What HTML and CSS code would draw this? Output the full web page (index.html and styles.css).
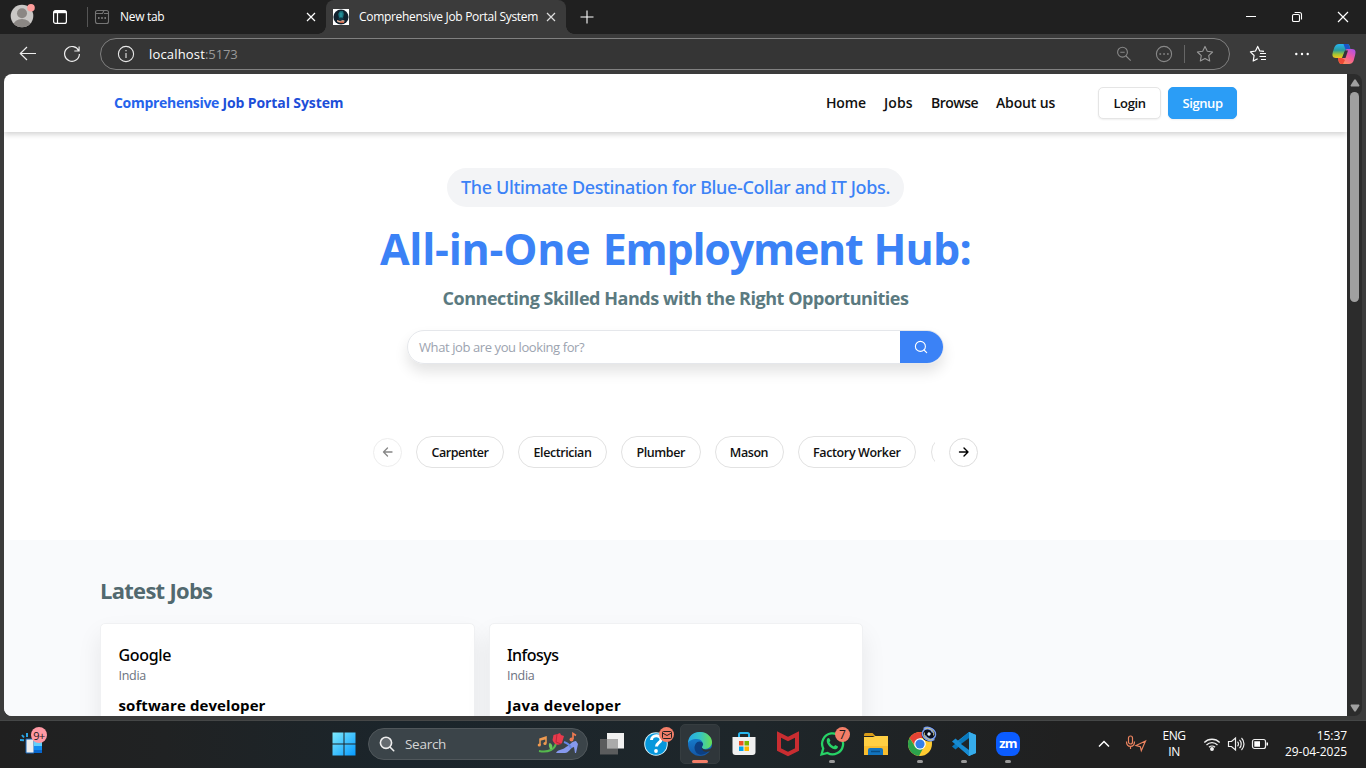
FILE: index.html
```html
<!DOCTYPE html>
<html lang="en">
<head>
<meta charset="utf-8">
<title>Comprehensive Job Portal System</title>
<link rel="stylesheet" href="styles.css">
</head>
<body>
<div class="tabs">
  <svg class="avatar" width="26" height="26" viewBox="0 0 26 26"><defs><clipPath id="av"><circle cx="12" cy="14" r="11.3"/></clipPath></defs><g clip-path="url(#av)"><rect width="26" height="26" fill="#c9c7c5"/><circle cx="12" cy="11.3" r="5" fill="#8b8784"/><ellipse cx="12" cy="23" rx="8.5" ry="6" fill="#8b8784"/></g><circle cx="21" cy="5.7" r="3.8" fill="#ff9d9b"/></svg>
  <svg class="workspace" width="16" height="16" viewBox="0 0 16 16" fill="none" stroke="#fff" stroke-width="1.2"><rect x="1.6" y="1.6" width="12.8" height="12.8" rx="2"/><path d="M2 3h12" stroke-width="2.4"/><path d="M5.5 4v10"/></svg>
  <i class="tab-line"></i>
  <div class="tab new-tab">
    <svg width="16" height="16" viewBox="0 0 16 16" fill="none" stroke="#757575" stroke-width="1.1"><rect x="1.5" y="1.5" width="13" height="13" rx="2"/><path d="M1.5 4.5h7l1.5-3M10 4.5h4.5"/><path d="M4 9h1.6M7.2 9h1.6M10.4 9H12" stroke-width="1.8"/></svg>
    <span class="tab-title short">New tab</span>
    <svg class="x" width="12" height="12" viewBox="0 0 12 12" stroke="#fff" stroke-width="1.2"><path d="M2 2l8 8M10 2l-8 8"/></svg>
  </div>
  <div class="tab active">
    <svg width="16" height="16" viewBox="0 0 16 16"><path fill="#fff" d="M0 0h16v16H0z"/><circle cx="8" cy="8" r="7.6" fill="#10202d"/><path d="M5 5l2-3h3l1 3-1 4H6z" fill="#14636e"/><path d="M6.500 3.500h3V8h-3z" fill="#248d96"/><path d="M5 9h6l-1 2H6z" fill="#103746"/><path d="M4 11l3 1 3-1 2 1-2 1.500H6l-2-1z" fill="#e2b49a"/><path d="M7 12.500h4V14H7z" fill="#c75f42"/></svg>
    <span class="tab-title">Comprehensive Job Portal System</span>
    <svg class="x" width="12" height="12" viewBox="0 0 12 12" stroke="#ddd" stroke-width="1.2"><path d="M2 2l8 8M10 2l-8 8"/></svg>
  </div>
  <svg class="plus" width="14" height="14" viewBox="0 0 14 14" stroke="#fff" stroke-width="1.1"><path d="M7 .5v13M.5 7h13"/></svg>
  <div class="window-controls">
    <svg width="12" height="12" viewBox="0 0 12 12" stroke="#fff"><path d="M1 5.5h10"/></svg>
    <svg width="12" height="12" viewBox="0 0 12 12" fill="none" stroke="#fff" stroke-width="1.1"><rect x="1.5" y="3.5" width="7" height="7" rx="1.3"/><path d="M3.6 1.5h4.9a2 2 0 0 1 2 2v4.9"/></svg>
    <svg width="12" height="12" viewBox="0 0 12 12" stroke="#fff" stroke-width="1.2"><path d="M1 1l10 10M11 1L1 11"/></svg>
  </div>
</div>
<div class="toolbar">
  <svg class="back" width="18" height="16" viewBox="0 0 18 16" fill="none" stroke="#eee" stroke-width="1.2"><path d="M17 7.5H1.5M8 1L1.3 7.5 8 14"/></svg>
  <svg class="reload" width="18" height="18" viewBox="0 0 18 18" fill="none" stroke="#eee" stroke-width="1.2"><path d="M15.8 6A7.4 7.4 0 1 0 16.4 9M16.1 1.4V6h-4.8"/></svg>
  <div class="address">
    <svg class="info" width="18" height="18" viewBox="0 0 18 18" fill="none" stroke="#e8e8e8" stroke-width="1.1"><circle cx="9" cy="9" r="7.6"/><path d="M9 8v5M9 5v1.3"/></svg>
    <span class="host">localhost</span><span class="port">:5173</span>
    <svg class="zoom-out" width="16" height="16" viewBox="0 0 16 16" fill="none" stroke="#888" stroke-width="1.1"><circle cx="6.5" cy="6.2" r="4.9"/><path d="M10 10l4.7 4.7M4.3 6.2h4.4"/></svg>
    <svg class="more-circle" width="18" height="18" viewBox="0 0 18 18" fill="none" stroke="#888" stroke-width="1.1"><circle cx="9" cy="9" r="7.6"/><path d="M4.4 9h1.7M8.2 9h1.7M12 9h1.7" stroke-width="1.7"/></svg>
    <i class="address-line"></i>
    <svg width="18" height="18" viewBox="0 0 18 18" fill="none" stroke="#999" stroke-width="1.1" stroke-linejoin="round"><path d="M9 1.4l2.3 4.9 5.3.7-3.9 3.7 1 5.3L9 13.4 4.3 16l1-5.3L1.4 7l5.3-.7z"/></svg>
  </div>
  <svg class="favorites" width="18" height="18" viewBox="0 0 18 18" fill="none" stroke="#fff" stroke-width="1.2" stroke-linejoin="round"><path d="M15 6.400l-4.200-.5L8.700 1.400 6.500 6 1.400 6.800l3.700 3.700-.9 5.500 4.500-2.300M11 8.500h6M10.500 11.500h6.500M12 14.500h5"/></svg>
  <svg class="dots" width="16" height="4" viewBox="0 0 16 4" fill="#fff"><circle cx="2.3" cy="2" r="1.2"/><circle cx="8" cy="2" r="1.2"/><circle cx="13.7" cy="2" r="1.2"/></svg>
  <svg class="copilot" width="24" height="22" viewBox="0 0 24 22"><defs><linearGradient id="c1" x2="0" y2="1"><stop stop-color="#26b5f4"/><stop offset=".45" stop-color="#2b9b9b"/><stop offset=".75" stop-color="#a9c62f"/><stop offset="1" stop-color="#f5c022"/></linearGradient><linearGradient id="c2" x1="1" x2=".2" y2="1"><stop stop-color="#a650ef"/><stop offset=".5" stop-color="#f35b9a"/><stop offset="1" stop-color="#ff9a50"/></linearGradient></defs><path d="M7 1h8c2 0 2.500 1.500 3 3.500L18.500 7H16c-2.500 0-3.500 1.500-4 3.500L10.500 15H4c-4 0-4-3-3-6.500L2.500 4C3.500 2 5 1 7 1z" fill="url(#c1)"/><path d="M11.500 1H15c2 0 2.500 2 3 4l.5 1.500h-5z" fill="#1b55c9"/><path d="M17 21H9.500c-2 0-2.500-1.500-3-3.500L6 15h3c2.500 0 3.500-1.500 4-3.500L14.500 6H20c4 0 4 3 3 6.500L21.500 18c-.7 2-2.500 3-4.500 3z" fill="url(#c2)"/><path d="M6 15h4l3 2-2 4H9.500c-2 0-2.700-2-3-3.500z" fill="#ee4a37"/><path d="M13 7.500h3l-2.500 7.500H10z" fill="#33343b"/></svg>
</div>
<div class="window">
  <main class="page">
    <header class="site-nav">
      <b class="brand">Comprehensive <em>Job Portal System</em></b>
      <nav><a class="n1">Home</a><a class="n2">Jobs</a><a class="n3">Browse</a><a class="n4">About us</a></nav>
      <div class="auth"><button class="login">Login</button><button class="signup">Signup</button></div>
    </header>
    <section class="hero">
      <span class="pill">The Ultimate Destination for Blue-Collar and IT Jobs.</span>
      <h1><span class="lead">All-in-One </span><span class="mid">Employment</span> Hub:</h1>
      <h2>Connecting Skilled Hands with the Right Opportunities</h2>
      <div class="search"><span>What job are you looking for?</span><button><svg width="14" height="14" viewBox="0 0 14 14" fill="none" stroke="#fff" stroke-width="1.1" stroke-linecap="round"><circle cx="6.400" cy="6.400" r="5"/><path d="M10 10l2.700 2.700"/></svg></button></div>
      <div class="carousel">
        <button class="round off"><svg width="12" height="12" viewBox="0 0 12 12" fill="none" stroke="#111" stroke-width="1.300" stroke-linecap="round" stroke-linejoin="round"><path d="M10 6H1.500M5.500 2l-4 4 4 4"/></svg></button>
        <div class="chips"><button class="c1">Carpenter</button><button class="c2">Electrician</button><button class="c3">Plumber</button><button class="c4">Mason</button><button class="c5">Factory Worker</button><button class="c6"></button></div>
        <button class="round"><svg width="12" height="12" viewBox="0 0 12 12" fill="none" stroke="#000" stroke-width="1.400" stroke-linecap="round" stroke-linejoin="round"><path d="M1.500 6H10M6 2l4 4-4 4"/></svg></button>
      </div>
    </section>
    <section class="latest">
      <h3>Latest Jobs</h3>
      <div class="cards">
        <article><h4>Google</h4><p>India</p><h5>software developer</h5></article>
        <article><h4 class="inf">Infosys</h4><p>India</p><h5 class="java">Java developer</h5></article>
      </div>
    </section>
  </main>
  <div class="scrollbar">
    <svg width="10" height="8" viewBox="0 0 10 8"><path d="M4.300.6h1.400L9.500 6.500 9 7.500H1L.5 6.500z" fill="#a0a0a0"/></svg>
    <i></i>
    <svg class="down" width="10" height="8" viewBox="0 0 10 8"><path d="M4.300 7.400h1.400L9.500 1.500 9 .5H1L.5 1.500z" fill="#a0a0a0"/></svg>
  </div>
</div>
<footer class="taskbar">
  <div class="widget"><svg width="24" height="24" viewBox="0 0 24 24"><path d="M6 7h8v14H6z" fill="#ededed" stroke="#1565b8"/><path d="M14 7h8v14h-8z" fill="#128cf0"/><path d="M14 7h8v7h-8z" fill="#62d0fb"/><path d="M14 18h8v3h-8z" fill="#0867ce"/><path d="M0 8l4 .3M2 3l2 2.500M7 1v4" stroke="#29a5e6" stroke-width="2"/></svg><span class="badge pink">9+</span></div>
  <svg class="start" width="24" height="24" viewBox="0 0 24 24"><defs><linearGradient id="w" x2="1" y2="1"><stop stop-color="#7eeafc"/><stop offset="1" stop-color="#069aff"/></linearGradient></defs><path d="M.5.500h11v11H.5zM12.500.500h11v11h-11zM.5 12.500h11v11H.5zM12.500 12.500h11v11h-11z" fill="url(#w)"/></svg>
  <div class="taskbar-search">
    <svg width="16" height="16" viewBox="0 0 16 16" fill="#656b70" stroke="#eee" stroke-width="1.600" stroke-linecap="round"><circle cx="7" cy="6.800" r="5.600"/><path d="M11.200 11.200l3.500 3.500"/></svg>
    <span>Search</span>
    <svg class="doodle" width="42" height="24" viewBox="0 0 42 24" fill="none"><path d="M3 13V7l6-2v6M3 8l6-1.500" stroke="#ef9a50" stroke-width="1.500"/><circle cx="2.300" cy="13" r="1.600" fill="#ef9a50"/><circle cx="8" cy="11.500" r="1.600" fill="#ef9a50"/><path d="M36 7V1.500l3 2" stroke="#ee7a51" stroke-width="1.700"/><circle cx="34.500" cy="7.500" r="2" fill="#ee7a51"/><path d="M19 11c-1 6-7 10-17 8" stroke="#55b84d" stroke-width="2"/><path d="M13 17c-2-4-1-6 0-6 2 1 3 3 2 6z" fill="#6cc95d"/><path d="M15.500 8l1-5 4-1 2.500-1 1 2 3 1-2 7c-3 3-8 2-9.500-3z" fill="#e83a4c"/><path d="M20 2l-1 8 5 2" stroke="#ba2639"/><path d="M19 21c2-4 7-3 10-6 4-2 6-6 10-6l2 3-2 9h-1l-1-6c-4 1-5 6-9 6h-9z" fill="#8699ee"/><path d="M27 10c3 1 6 3 7 6" stroke="#6587e8" stroke-width="2"/></svg>
  </div>
  <div class="apps">
    <div class="app"><svg width="26" height="26" viewBox="0 0 26 26"><path d="M8 2h17v15.500H8z" fill="#f0f0f0"/><path d="M1 8h18v15.500H1z" fill="#666" fill-opacity=".85"/><path d="M8 8h11v9.500H8z" fill="#aaa"/></svg></div>
    <div class="app"><svg width="26" height="26" viewBox="0 0 26 26"><circle cx="13" cy="13" r="11.800" fill="#d9f3fb"/><circle cx="13" cy="13" r="10.800" fill="#0697dc"/><path d="M8.500 9c0-5.500 9.500-5.500 9.500-.5 0 3-4.500 3.500-4.500 7" fill="none" stroke="#fff" stroke-width="3"/><circle cx="13" cy="20" r="1.900" fill="#fff"/></svg><span class="badge mail"><svg width="12" height="10" viewBox="0 0 12 10" fill="none" stroke="#222"><rect x="1.500" y="1.500" width="9" height="7" rx="1"/><path d="M1.500 3L6 5.500 10.500 3"/></svg></span></div>
    <div class="app current"><svg width="26" height="26" viewBox="0 0 26 26"><defs><linearGradient id="e" x2="1"><stop stop-color="#25a9e8"/><stop offset=".5" stop-color="#35c4c4"/><stop offset="1" stop-color="#69df52"/></linearGradient><linearGradient id="e2" x2="0" y2="1"><stop stop-color="#1788d8"/><stop offset="1" stop-color="#1357a7"/></linearGradient></defs><circle cx="13" cy="13" r="12" fill="url(#e2)"/><path d="M1 13C1 5 6 1 13 1c7 0 12 5 12 10 0 4-3 7-7 7-3 0-4-1-3-3 2-4-1-7-5-7-5 0-9 2-9 5z" fill="url(#e)"/><path d="M7.500 17c0-4 3-8 7-6 2 1 2 3 .7 4.500-1 3 2.500 5 8.500 2.800-5 7-15 8-16.200-1.300z" fill="#0d3f82"/><path d="M15 15c-1 3 3 5 8.500 2.500l2-1.500v2l-2 2c-5 2-10 0-8.500-5z" fill="#2f363a"/></svg></div>
    <div class="app"><svg width="26" height="26" viewBox="0 0 26 26"><path d="M8 7V3.500C8 2.500 8.500 2 9.500 2h7c1 0 1.500.5 1.500 1.500V7" fill="none" stroke="#27b6ee" stroke-width="2"/><path d="M1.500 6h23v15q0 3-3 3h-17q-3 0-3-3z" fill="#f0f0f0"/><path d="M8 10h4.500v4.500H8z" fill="#ef5126"/><path d="M13.500 10H18v4.500h-4.500z" fill="#7eb900"/><path d="M8 15.500h4.500V20H8z" fill="#00a4ed"/><path d="M13.500 15.500H18V20h-4.500z" fill="#fdb800"/></svg></div>
    <div class="app"><svg width="26" height="26" viewBox="0 0 26 26" fill="none" stroke="#c92d31" stroke-width="4"><path d="M4 3.500L13 8l9-4.500v15L13 23l-9-4.500z"/></svg></div>
    <div class="app running"><svg width="26" height="26" viewBox="0 0 26 26"><path d="M2.500 23.500l1.700-6A10.500 10.500 0 1 1 8.500 22z" fill="none" stroke="#27d366" stroke-width="2.300"/><path d="M8 8c1-1.500 2-1.200 2.500-.2l.9 2-1 1.500c1.300 2.300 2.800 3.500 4.500 4.200l1.300-1.600 2.800 1.500c0 2-1.800 3-3.500 2.800C11 17.500 6.500 12 8 8z" fill="#27d366"/></svg><span class="badge">7</span></div>
    <div class="app"><svg width="26" height="26" viewBox="0 0 26 26"><path d="M1 3.500q0-1.500 1.500-1.500h7l3 3H1z" fill="#d89b18"/><path d="M1 6h9l2-1h13v19H1z" fill="#ffcf43"/><path d="M1 15h24v9H1z" fill="#f8bd2e"/><path d="M5 24v-5q0-2 2-2h11q2 0 2 2v5z" fill="#1273bd"/><path d="M8 20.500h9" stroke="#084d84" stroke-width="1.500"/></svg></div>
    <div class="app running"><svg width="26" height="26" viewBox="0 0 26 26"><circle cx="13" cy="13" r="12" fill="#ffcb31"/><path d="M2.600 7a12 12 0 0 1 20.800 0H13L9 16z" fill="#e84335"/><path d="M2.600 7A12 12 0 0 0 12 25l5-9.500H8z" fill="#2ba24c"/><circle cx="13" cy="13" r="5.800" fill="#fff"/><circle cx="13" cy="13" r="4.600" fill="#347fe9"/></svg><svg class="galaxy" width="18" height="18" viewBox="0 0 18 18" fill="none"><circle cx="9" cy="9" r="7.500" fill="#0c101b"/><g transform="rotate(30 9 9)"><path d="M1.500 7c3-6 13-5 14 1 .5 5-6 7-9 4M16.500 11c-3 6-13 5-14-1-.5-5 6-7 9-4" stroke="#7ba0f0" stroke-width="1.400"/><path d="M3 6.500c3-4 10-3 10.500 1.500M15 11.500c-3 4-10 3-10.500-1.500" stroke="#c8c38e"/><circle cx="9" cy="9" r="1.700" fill="#dcecff"/></g></svg></div>
    <div class="app running"><svg width="26" height="26" viewBox="0 0 26 26"><path d="M18 1l7 3v18l-7 3L4 12z" fill="#249be2"/><path d="M18 7L4.500 18.500 1 15.500 18 1z" fill="#0878bd"/><path d="M18 19L4.500 7.500 1 10.500 18 25z" fill="#178bd2"/><path d="M18 7v12l-8-6z" fill="#1f262a"/><path d="M18 1l7 3v18l-7 3z" fill="#36aceb"/></svg></div>
    <div class="app running"><span class="zoom-app">zm</span></div>
  </div>
  <div class="tray">
    <svg class="chevron" width="12" height="8" viewBox="0 0 12 8" fill="none" stroke="#fff" stroke-width="1.500"><path d="M1 6.500l5-5 5 5"/></svg>
    <svg class="mic" width="22" height="18" viewBox="0 0 22 18" fill="none" stroke="#ec8460" stroke-width="1.200"><rect x="3.500" y="1" width="4" height="8" rx="2"/><path d="M1.500 6.500c0 6.500 8 6.500 8 0M5.500 11.500v2.500M20.500 6L11 10.500l4.300 1.200 1 4z"/></svg>
    <div class="lang"><span>ENG</span><span>IN</span></div>
    <svg class="wifi" width="18" height="16" viewBox="0 0 18 16" fill="none" stroke="#eee" stroke-width="1.300"><path d="M1.300 6.500a10.800 10.800 0 0 1 15.400 0M3.500 9a7.700 7.700 0 0 1 11 0M6 11.300a4.300 4.300 0 0 1 6 0"/><circle cx="9" cy="13" r="1.300" fill="#fff"/></svg>
    <svg class="sound" width="18" height="16" viewBox="0 0 18 16" fill="none" stroke="#eee" stroke-width="1.200"><path d="M1.500 5.500h3L8.500 2v12l-4-3.500h-3zM10.500 5.800a3 3 0 0 1 0 4.400M12.500 3.800a6 6 0 0 1 0 8.400M14.500 2a8.500 8.500 0 0 1 0 12"/></svg>
    <svg class="battery" width="18" height="12" viewBox="0 0 18 12"><rect x="1.500" y="1.500" width="13" height="9" rx="2" fill="none" stroke="#eee" stroke-width="1.200"/><path d="M3.300 3.300H9v5.400H3.300zM15.500 4.500H17v3h-1.500z" fill="#fff"/></svg>
    <div class="clock"><span>15:37</span><span>29-04-2025</span></div>
  </div>
</footer>
</body>
</html>
```
FILE: styles.css
```css
* { box-sizing: border-box; }
body { margin: 0; width: 1366px; height: 768px; overflow: hidden; background: #3b3b3b; font-family: "Open Sans", "Noto Sans", sans-serif; white-space: nowrap; display: flex; flex-direction: column; }
svg { display: block; flex: none; }
button { font-family: inherit; padding: 0; margin: 0; white-space: nowrap; }
h1, h2, h3, h4, h5, p { margin: 0; }

.tabs { height: 34px; flex: none; background: #202020; display: flex; align-items: center; color: #fff; }
.avatar { margin: -4px 0 0 10px; }
.workspace { margin-left: 16px; }
.tab-line { width: 1px; height: 20px; background: #555; margin-left: 19px; }
.tab { display: flex; align-items: center; height: 34px; }
.new-tab { width: 223px; margin-left: 6px; }
.tab-title { font-size: 12px; line-height: 16px; letter-spacing: -.313px; margin: -1px 0 0 10px; }
.short { letter-spacing: -.3px; }
.x { margin-left: auto; }
.active { position: relative; width: 240px; margin-left: 9px; padding: 0 9px 0 7px; background: #3b3b3b; border-radius: 8px 8px 0 0; }
.active::before, .active::after { content: ""; position: absolute; bottom: 0; width: 8px; height: 8px; }
.active::before { left: -8px; background: radial-gradient(circle at 0 0, #202020 7.5px, #3b3b3b 8px); }
.active::after { right: -8px; background: radial-gradient(circle at 100% 0, #202020 7.5px, #3b3b3b 8px); }
.plus { margin-left: 14px; }
.window-controls { margin-left: auto; display: flex; gap: 34px; margin-right: 17px; }

.toolbar { height: 40px; flex: none; display: flex; align-items: center; }
.back { margin-left: 19px; }
.reload { margin-left: 26px; }
.address { width: 1130px; height: 32px; margin-left: 19px; border: 1px solid #808080; border-radius: 16px; background: #353535; display: flex; align-items: center; padding: 0 15px 0 16px; font-size: 13px; }
.host { color: #fff; margin-left: 14px; letter-spacing: .17px; }
.port { color: #999; letter-spacing: -.1px; }
.zoom-out { margin-left: auto; }
.more-circle { margin-left: 23px; }
.address-line { width: 1px; height: 18px; background: #666; margin: 0 11px 0 11px; }
.favorites { margin-left: 19px; }
.dots { margin-left: 27px; }
.copilot { margin-left: 22px; }

.window { display: flex; height: 646px; flex: none; padding-left: 4px; }
.page { width: 1343px; height: 642px; background: #fff; border-radius: 8px 0 0 8px; overflow: hidden; display: flex; flex-direction: column; }
.site-nav { position: relative; height: 58px; flex: none; padding: 0 110px; display: flex; align-items: center; box-shadow: 0 2px 6px #0003; }
.brand { font-size: 14px; margin-top: -2px; letter-spacing: -.3px; color: #2563eb; }
.brand em { font-style: normal; letter-spacing: -.1px; color: #1d4ed8; }
nav { margin: -2px 0 0 auto; display: flex; gap: 18px; font-size: 14px; font-weight: 600; color: #111; }
.n1 { width: 40px; letter-spacing: -.15px; }
.n2 { width: 29px; letter-spacing: .1px; }
.n3 { width: 47px; letter-spacing: -.5px; }
.n4 { width: 60px; letter-spacing: -.14px; }
.auth { display: flex; gap: 7px; margin-left: 42px; }
.auth button { height: 32px; font-size: 13px; font-weight: 600; border-radius: 5px; border: 1px solid #e5e5e5; background: #fff; color: #111; box-shadow: 0 1px 2px #0001; }
.auth .login { width: 63px; letter-spacing: -.4px; }
.auth .signup { width: 69px; letter-spacing: -.4px; color: #fff; background: #2b9df6; border-color: #2b9df6; }

.hero { height: 408px; flex: none; display: flex; flex-direction: column; align-items: center; padding-top: 36px; }
.pill { width: 457px; height: 39px; border-radius: 20px; background: #f3f4f6; color: #3b82f6; font: 500 18px/39px "Noto Sans", sans-serif; letter-spacing: -.358px; text-align: center; }
h1 { color: #3b82f6; font-size: 43px; line-height: 56px; letter-spacing: -.75px; margin-top: 14px; }
.lead { letter-spacing: -.25px; word-spacing: 1.5px; }
.mid { letter-spacing: -1.25px; margin-right: .5px; }
h2 { color: #5b7a80; font-size: 18px; line-height: 26px; letter-spacing: -.457px; margin-top: 8px; }
.search { width: 537px; height: 34px; margin-top: 19px; border: 1px solid #e5e7eb; border-radius: 17px; overflow: hidden; display: flex; align-items: center; justify-content: space-between; color: #9ca3af; font-size: 13px; letter-spacing: -.41px; padding-left: 11px; box-shadow: 0 8px 14px #0000001c; }
.search button { width: 43px; height: 34px; border: 0; background: #3b82f6; display: grid; place-items: center; padding-right: 2px; }
.carousel { display: flex; align-items: center; margin-top: 72px; gap: 14px; width: 605px; }
.round { width: 29px; height: 29px; flex: none; border-radius: 50%; border: 1px solid #ddd; background: #fff; display: grid; place-items: center; }
.off { opacity: .5; }
.chips { width: 519px; overflow: hidden; display: flex; gap: 14px; }
.chips button { flex: none; height: 32px; border: 1px solid #e2e2e2; border-radius: 16px; background: #fff; color: #111; font-size: 12.5px; font-weight: 600; letter-spacing: -.43px; }
.chips .c1 { width: 88px; letter-spacing: -.45px; }
.chips .c2 { width: 89px; }
.chips .c3 { width: 79.5px; }
.chips .c4 { width: 69px; }
.chips .c5 { width: 118.500px; letter-spacing: -.36px; }
.chips .c6 { width: 90px; margin-left: .5px; }

.latest { height: 190px; flex: none; background: #f9fafc; padding: 33px 96px 0; }
h3 { color: #52696f; font-size: 22px; line-height: 34px; letter-spacing: -.72px; }
.cards { display: flex; gap: 14px; margin-top: 16px; }
.cards article { width: 374.5px; height: 200px; background: #fff; border: 1px solid #f0f1f3; border-radius: 5px; box-shadow: 0 12px 24px #00000014; padding: 19px 17.5px; }
h4 { font: 500 16px/24px "Noto Sans", sans-serif; letter-spacing: -.34px; }
.inf { letter-spacing: -.54px; }
.cards p { font-size: 12.5px; line-height: 18px; color: #6b7280; letter-spacing: -.3px; }
h5 { font-size: 15px; line-height: 20px; margin-top: 10px; letter-spacing: .094px; }
.java { letter-spacing: .265px; }

.scrollbar { width: 15px; height: 642px; background: #2c2c2c; border-radius: 0 8px 8px 0; display: flex; flex-direction: column; align-items: center; padding: 5px 0 4px; }
.scrollbar i { width: 9px; height: 210px; border-radius: 5px; background: #a0a0a0; margin-top: 5px; }
.down { margin-top: auto; }

.taskbar { height: 48px; flex: none; border-top: 1px solid #454747; padding-bottom: 1px; background: linear-gradient(90deg, #202020 0, #202223 12%, #1b252b 29%, #1e262a 55%, #202020 78%); display: flex; align-items: center; color: #fff; }
.widget { position: relative; margin-left: 20px; }
.badge { position: absolute; width: 15px; height: 15px; left: 20px; top: -5px; border-radius: 50%; background: #f37e68; color: #1a1a1a; font-size: 12px; line-height: 15px; text-align: center; display: grid; place-items: center; }
.pink { left: 11px; top: -5px; width: 16px; height: 16px; background: #ff99a4; font-size: 11px; letter-spacing: -.5px; }
.start { margin-left: 288px; }
.taskbar-search { width: 220px; height: 32px; margin-left: 12px; border-radius: 16px; border: 1px solid #50575b; background: #3b4449; display: flex; align-items: center; padding: 0 8px 0 10px; }
.taskbar-search span { font-size: 13.5px; color: #d5d5d5; letter-spacing: -.28px; margin: -1px 0 0 10px; }
.doodle { margin-left: auto; }
.apps { display: flex; gap: 4px; margin-left: 4px; }
.app { position: relative; width: 40px; height: 40px; display: grid; place-items: center; border-radius: 5px; }
.app .badge { left: 23px; top: 3px; }
.current { background: #2f363a; border: 1px solid #363d40; }
.running::after, .current::after { content: ""; position: absolute; bottom: 1px; left: 17px; width: 6px; height: 3px; border-radius: 2px; background: #999; }
.current::after { left: 11px; bottom: 0; width: 16px; background: #f37e68; }
.galaxy { position: absolute; left: 20px; top: 1px; }
.zoom-app { width: 24px; height: 24px; border-radius: 8px; background: #0b5cff; font-size: 13px; font-weight: 700; line-height: 22px; text-align: center; letter-spacing: -.7px; }
.tray { flex: 1; display: flex; align-items: center; font-size: 12px; line-height: 16px; padding-right: 19px; }
.chevron { margin-left: 70px; }
.mic { margin-left: 15px; }
.lang { display: flex; flex-direction: column; align-items: center; width: 24px; margin-left: 15px; letter-spacing: -.4px; }
.wifi { margin-left: 17px; }
.sound { margin-left: 6px; }
.battery { margin-left: 6px; }
.clock { display: flex; flex-direction: column; align-items: flex-end; margin-left: auto; letter-spacing: -.063px; }
```
